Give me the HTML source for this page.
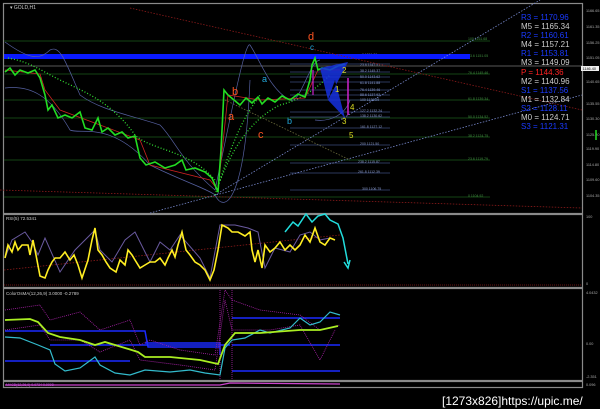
<!DOCTYPE html>
<html><head><meta charset="utf-8"><style>
html,body{margin:0;padding:0;background:#000;width:600px;height:409px;overflow:hidden}
svg{position:absolute;left:0;top:0}
text{font-family:"Liberation Sans",sans-serif}
</style></head><body>
<svg width="600" height="409" viewBox="0 0 600 409" xmlns="http://www.w3.org/2000/svg">
<rect width="600" height="409" fill="#000"/>
<g fill="none" stroke="#8a8a8a" stroke-width="1.2">
<rect x="3.5" y="3.5" width="579" height="210"/>
<rect x="3.5" y="214.5" width="579" height="73"/>
<rect x="3.5" y="288.5" width="579" height="92"/>
<rect x="3.5" y="381.5" width="579" height="6"/>
</g>
<text x="10" y="9" font-size="5" fill="#ccc">▾ GOLD,H1</text>
<g stroke="#1d5a1d" stroke-width="0.8">
<line x1="4" y1="41" x2="490" y2="41"/><line x1="4" y1="74" x2="490" y2="74"/>
<line x1="4" y1="100" x2="490" y2="100"/><line x1="4" y1="118" x2="490" y2="118"/>
<line x1="4" y1="137" x2="490" y2="137"/><line x1="4" y1="160" x2="490" y2="160"/>
<line x1="4" y1="197" x2="490" y2="197"/>
</g>
<g stroke="#3a4a7a" stroke-width="0.7">
<line x1="290" y1="64" x2="390" y2="64"/><line x1="290" y1="72" x2="390" y2="72"/>
<line x1="290" y1="77" x2="390" y2="77"/><line x1="290" y1="82" x2="390" y2="82"/>
<line x1="290" y1="90" x2="390" y2="90"/><line x1="290" y1="95" x2="390" y2="95"/>
<line x1="290" y1="100" x2="390" y2="100"/><line x1="290" y1="112" x2="390" y2="112"/>
<line x1="290" y1="117" x2="390" y2="117"/><line x1="290" y1="128" x2="390" y2="128"/>
<line x1="290" y1="145" x2="390" y2="145"/><line x1="290" y1="163" x2="390" y2="163"/>
<line x1="290" y1="173" x2="390" y2="173"/><line x1="290" y1="190" x2="390" y2="190"/>
</g>
<g font-size="3.5" fill="#8899cc">
<text x="362" y="56">0 1151.09</text><text x="360" y="66">23.6 1147.51</text><text x="360" y="72">38.2 1145.37</text>
<text x="360" y="78">50.0 1143.62</text><text x="360" y="84">61.8 1141.88</text><text x="360" y="91">76.4 1139.46</text>
<text x="360" y="96">88.6 1137.92</text><text x="360" y="101">100 1136.29</text><text x="360" y="112">127.2 1132.24</text>
<text x="360" y="117">138.2 1130.62</text><text x="360" y="128">161.8 1127.12</text><text x="360" y="145">200 1121.50</text>
<text x="358" y="163">238.2 1115.87</text><text x="358" y="173">261.8 1112.39</text><text x="362" y="190">300 1106.75</text>
</g>
<g font-size="3.5" fill="#3f8f3f">
<text x="468" y="40">100 1161.68</text><text x="468" y="57">23.6 1151.05</text><text x="468" y="74">76.4 1145.46</text>
<text x="468" y="100">61.8 1139.34</text><text x="468" y="118">50.0 1134.52</text><text x="468" y="137">38.2 1124.75</text>
<text x="468" y="160">23.6 1119.79</text><text x="468" y="197">0 1104.92</text>
</g>
<rect x="4" y="54" width="466" height="5" fill="#0a1aff"/>
<line x1="4" y1="66" x2="582" y2="66" stroke="#777" stroke-width="0.8"/>
<g fill="none" stroke-dasharray="1.5,1.5" stroke-width="0.8">
<line x1="130" y1="8" x2="582" y2="110" stroke="#8a1a1a"/>
<line x1="0" y1="190" x2="582" y2="208" stroke="#8a1a1a"/>
<line x1="215" y1="195" x2="540" y2="0" stroke="#7788cc"/>
<line x1="150" y1="213" x2="582" y2="95" stroke="#7788cc"/>
<line x1="225" y1="100" x2="350" y2="160" stroke="#6a6a3a"/>
<line x1="4" y1="270" x2="340" y2="235" stroke="#8a1a1a"/>
</g>
<g fill="none" stroke="#5560a0" stroke-width="0.7">
<path d="M5,42 C30,60 40,60 50,50 C60,45 65,60 80,95 C100,110 130,115 160,125 C175,140 180,160 215,190 C230,120 245,40 250,45 C260,60 270,90 290,100 C300,105 310,60 320,60"/>
<path d="M5,88 C30,85 50,95 70,130 C80,135 110,120 150,165 C180,180 210,190 215,195 C225,215 245,200 250,80"/>
<path d="M315,120 C330,122 345,115 350,100"/>
</g>
<g fill="none" stroke="#33dd33" stroke-width="1.3" stroke-dasharray="1,2">
<path d="M8,58 C30,62 40,70 60,80 C80,90 110,100 135,135 C150,150 190,150 215,180"/>
<path d="M215,195 C230,150 250,120 280,105 C300,100 315,90 330,75"/>
<path d="M220,180 C240,120 250,110 260,95"/>
</g>
<path d="M5,70 L40,74 L45,90 L60,110 L100,125 L140,140 L150,165 L210,180 L218,190 L228,95 L260,100 L305,98 L318,70 L340,70" fill="none" stroke="#cc2222" stroke-width="0.8"/>
<path d="M5,72 L10,68 L15,75 L20,70 L28,73 L35,70 L40,78 L45,95 L48,110 L52,105 L58,118 L65,115 L72,118 L80,112 L85,128 L92,130 L98,118 L102,132 L108,128 L115,135 L122,132 L128,138 L135,136 L140,158 L146,165 L155,162 L165,168 L175,165 L182,160 L186,170 L195,168 L205,172 L212,178 L218,192 L221,150 L224,90 L228,95 L234,100 L240,105 L246,98 L252,103 L258,97 L262,104 L268,98 L275,102 L282,96 L290,100 L298,94 L305,97 L310,80 L312,65 L315,58 L318,70 L322,68 L330,70 L338,66 L345,64" fill="none" stroke="#22dd22" stroke-width="1.6"/>
<path d="M320,68 L348,62 L328,100 Z M328,100 L345,118 L335,80 Z" fill="#1530e0" opacity="0.85"/>
<line x1="348" y1="78" x2="348" y2="115" stroke="#cc22cc" stroke-width="1.5"/>
<line x1="313" y1="70" x2="313" y2="95" stroke="#cc22cc" stroke-width="1.2"/>
<g font-family="Liberation Serif" font-size="11">
<text x="308" y="40" fill="#ff5522">d</text>
<text x="232" y="95" fill="#ff5522">b</text>
<text x="228" y="120" fill="#ff5522">a</text>
<text x="258" y="138" fill="#ff5522">c</text>
<text x="262" y="82" fill="#22aadd" font-size="9">a</text>
<text x="287" y="124" fill="#22aadd" font-size="9">b</text>
<text x="310" y="50" fill="#22aadd" font-size="8">c</text>
<text x="342" y="73" fill="#dddd22" font-size="8">2</text>
<text x="335" y="92" fill="#dddd22" font-size="8">1</text>
<text x="350" y="110" fill="#dddd22" font-size="8">4</text>
<text x="342" y="124" fill="#dddd22" font-size="8">3</text>
<text x="349" y="138" fill="#dddd22" font-size="8">5</text>
</g>
<g font-size="8">
<text x="521" y="20" fill="#1a3aff">R3 = 1170.96</text>
<text x="521" y="29" fill="#ccc">M5 = 1165.34</text>
<text x="521" y="38" fill="#1a3aff">R2 = 1160.61</text>
<text x="521" y="47" fill="#ccc">M4 = 1157.21</text>
<text x="521" y="56" fill="#1a3aff">R1 = 1153.81</text>
<text x="521" y="65" fill="#ccc">M3 = 1149.09</text>
<text x="521" y="75" fill="#ff2222">P  = 1144.36</text>
<text x="521" y="84" fill="#ccc">M2 = 1140.96</text>
<text x="521" y="93" fill="#1a3aff">S1 = 1137.56</text>
<text x="521" y="102" fill="#ccc">M1 = 1132.84</text>
<text x="521" y="111" fill="#1a3aff">S2 = 1128.11</text>
<text x="521" y="120" fill="#ccc">M0 = 1124.71</text>
<text x="521" y="129" fill="#1a3aff">S3 = 1121.31</text>
</g>
<rect x="581" y="66" width="18" height="5" fill="#eee"/>
<g font-size="3.8" fill="#aaa">
<text x="586" y="12">1166.65</text><text x="586" y="28">1161.35</text><text x="586" y="44">1156.25</text>
<text x="586" y="59">1151.05</text><text x="582.5" y="70" fill="#000">1146.40</text><text x="586" y="83">1140.65</text>
<text x="586" y="105">1135.55</text><text x="586" y="120">1130.30</text><text x="586" y="136">1125.20</text>
<text x="586" y="150">1119.90</text><text x="586" y="166">1114.80</text><text x="586" y="181">1109.60</text>
<text x="586" y="197">1104.35</text>
<text x="586" y="218">100</text><text x="586" y="285">0</text>
<text x="586" y="294">4.0432</text><text x="586" y="345">0.00</text><text x="586" y="378">-2.351</text><text x="586" y="386">0.096</text>
</g>
<line x1="596" y1="130" x2="596" y2="140" stroke="#22dd22" stroke-width="1.5"/>
<text x="6" y="220" font-size="4.5" fill="#ccc">RSI(5) 72.5341</text>
<path d="M5,258 L12,240 L25,232 L32,242 L38,255 L45,238 L60,272 L75,250 L85,240 L95,230 L100,250 L112,262 L125,240 L135,232 L150,262 L160,242 L170,250 L180,235 L200,258 L210,278 L220,225 L235,225 L248,228 L258,232 L265,268 L275,248 L290,252 L300,235 L310,232 L320,240 L330,238" fill="none" stroke="#6a5aa0" stroke-width="1"/>
<path d="M5,258 L8,245 L12,252 L15,242 L18,250 L22,245 L28,245 L30,255 L33,240 L36,255 L40,276 L45,278 L48,270 L52,262 L55,258 L60,258 L65,252 L70,260 L74,255 L78,265 L82,278 L88,260 L92,240 L95,228 L98,250 L102,255 L106,262 L110,268 L116,272 L120,260 L125,265 L128,250 L132,255 L135,260 L140,268 L145,265 L150,262 L155,262 L160,258 L165,265 L168,258 L172,250 L175,257 L178,245 L182,232 L186,250 L190,255 L195,262 L200,265 L205,270 L210,280 L214,270 L218,250 L222,225 L228,228 L232,232 L238,232 L245,236 L250,232 L252,250 L255,262 L258,250 L262,268 L265,245 L270,252 L275,248 L280,242 L285,250 L290,245 L295,250 L300,245 L305,235 L310,242 L315,228 L320,242 L325,245 L330,238 L335,240" fill="none" stroke="#ffee22" stroke-width="1.6"/>
<path d="M285,232 L293,222 L298,226 L306,214 L312,222 L318,216 L325,214 L330,220 L338,224 L343,238 L348,264" fill="none" stroke="#22dddd" stroke-width="1.5"/>
<path d="M344,262 L348,268 L350,260" fill="none" stroke="#22dddd" stroke-width="1.5"/>
<line x1="4" y1="285" x2="582" y2="285" stroke="#8a1a1a" stroke-width="0.7" stroke-dasharray="1,1"/>
<text x="6" y="295" font-size="4.5" fill="#ccc">ColorOsMA(12,26,9) 3.0000 -0.2789</text>
<g fill="none" stroke="#1a2aff" stroke-width="1.5">
<path d="M5,331 L145,331 L148,347 L220,347"/><path d="M5,361 L130,361"/><path d="M145,343 L220,343 L220,355"/>
<path d="M232,318 L340,318"/><path d="M232,345 L340,345"/><path d="M232,371 L340,371"/>
<path d="M50,345 L230,345"/>
</g>
<g fill="none" stroke="#aa22aa" stroke-width="0.8" stroke-dasharray="1,1">
<path d="M5,310 L40,305 L50,320 L80,312 L100,330 L130,320 L140,345 L150,340 L180,350 L215,355 L225,290 L232,300 L260,310 L300,315 L320,330 L340,325"/>
<path d="M5,330 L40,325 L50,340 L80,340 L100,352 L130,340 L140,360 L180,365 L215,370 L225,300 L232,330 L270,330 L300,325 L320,360 L335,330"/>
<line x1="220" y1="290" x2="220" y2="380"/><line x1="232" y1="290" x2="232" y2="380"/>
</g>
<path d="M5,337 L20,338 L38,345 L50,350 L55,364 L65,371 L80,368 L95,357 L100,365 L115,373 L130,375 L145,370 L170,372 L190,370 L205,373 L220,375 L225,348 L232,340 L245,338 L260,330 L270,333 L290,328 L300,318 L310,325 L320,322 L330,312 L340,315" fill="none" stroke="#33bbcc" stroke-width="1.2"/>
<path d="M5,320 L30,319 L38,322 L48,333 L60,337 L80,340 L95,345 L105,342 L125,348 L138,352 L145,357 L170,357 L200,360 L218,364 L225,345 L235,333 L260,333 L300,330 L320,330 L338,326" fill="none" stroke="#aaee22" stroke-width="1.8"/>
<text x="6" y="386" font-size="3.5" fill="#cc66ff">MACD(12,26,9) 0.9734 0.0098</text>
<path d="M5,385 L220,385 L230,383 L340,384" stroke="#cc44cc" stroke-width="1.2" fill="none"/>
<text x="442" y="405" font-size="12" fill="#fff" font-family="DejaVu Sans, sans-serif">[1273x826]https://upic.me/</text>
</svg>
</body></html>
